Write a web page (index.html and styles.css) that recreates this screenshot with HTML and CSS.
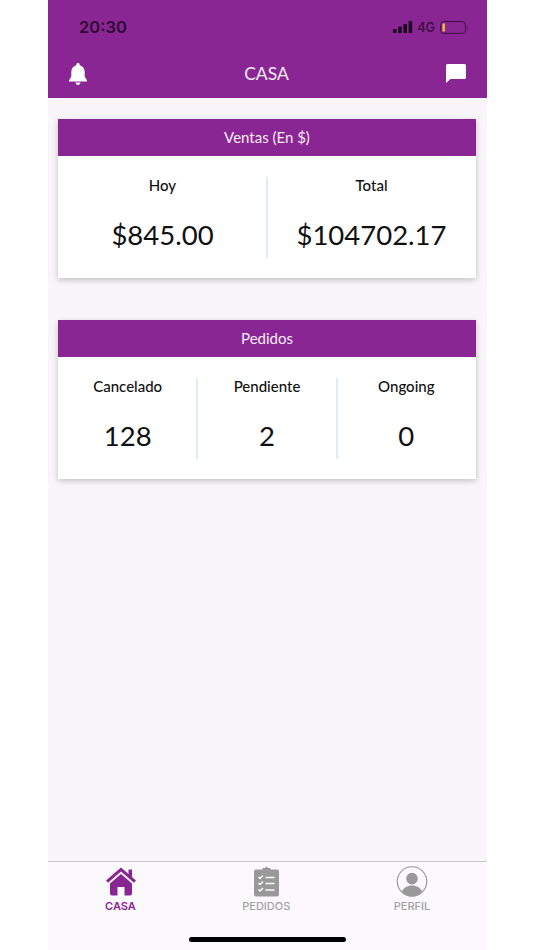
FILE: index.html
```html
<!DOCTYPE html>
<html lang="es">
<head>
<meta charset="utf-8">
<title>Casa</title>
<link rel="stylesheet" href="styles.css">
</head>
<body>
<div class="phone">
  <header class="top">
    <div class="status">
      <span class="time">20:30</span>
      <div class="indicators">
        <svg class="signal" viewBox="0 0 20 12" width="20" height="12"><rect x="0" y="8" width="3.6" height="4" rx=".6"/><rect x="5.2" y="5.5" width="3.6" height="6.5" rx=".6"/><rect x="10.4" y="3" width="3.6" height="9" rx=".6"/><rect x="15.6" y="0" width="3.6" height="12" rx=".6"/></svg>
        <span class="net">4G</span>
        <svg class="battery" viewBox="0 0 29 13" width="29" height="13"><rect x=".6" y=".6" width="24.8" height="11.8" rx="3" fill="none" stroke="#3d1042" stroke-width="1"/><rect x="2.5" y="2.5" width="2.4" height="8" fill="#f2c230"/><path d="M27 4.8c1 .3 1 3.1 0 3.4z" fill="#3d1042"/></svg>
      </div>
    </div>
    <div class="nav">
      <svg class="bell" viewBox="0 0 18 22" width="18" height="22"><path d="M9 0c1 0 1.7.7 1.700 1.700v.6c3.300.8 5 3.600 5 7v4.200L18 17.500v.9H0v-.9l2.300-4V9.300c0-3.400 1.700-6.200 5-7v-.6C7.300.7 8 0 9 0zM6.500 19.500h5C11.300 21 10.300 22 9 22s-2.300-1-2.500-2.500z"/></svg>
      <span class="nav-title">CASA</span>
      <svg class="chat" viewBox="0 0 20 19" width="20" height="19"><path d="M1.500 0h17A1.500 1.500 0 0 1 20 1.500v12a1.500 1.500 0 0 1-1.500 1.500H4.500L0 19V1.500A1.500 1.500 0 0 1 1.500 0z"/></svg>
    </div>
  </header>

  <main class="content">
    <section class="card">
      <h2 class="card-head">Ventas (En $)</h2>
      <div class="card-body">
        <div class="metric"><span class="label">Hoy</span><span class="value">$845.00</span></div>
        <div class="metric"><span class="label">Total</span><span class="value">$104702.17</span></div>
      </div>
    </section>
    <section class="card">
      <h2 class="card-head">Pedidos</h2>
      <div class="card-body">
        <div class="metric"><span class="label">Cancelado</span><span class="value">128</span></div>
        <div class="metric"><span class="label">Pendiente</span><span class="value">2</span></div>
        <div class="metric"><span class="label">Ongoing</span><span class="value">0</span></div>
      </div>
    </section>
  </main>

  <nav class="tabs">
    <div class="tab active">
      <svg viewBox="0 0 30 29" width="30" height="29"><path d="M15 0.500 22.500 7V2.500h3.500V10l4 3.500-2 2.200L15 4.500 2 15.700l-2-2.200z"/><path d="M15 7 26 16.500V26.500a2 2 0 0 1-2 2H18.500V20h-7v8.500H6a2 2 0 0 1-2-2V16.500z"/></svg>
      <span>CASA</span>
    </div>
    <div class="tab">
      <svg viewBox="0 0 25 30" width="25" height="30"><path fill-rule="evenodd" d="M2 3h6.500V1.500L11 1.500C11.500.5 12 0 12.500 0s1 .5 1.500 1.500h2.500V3H23a2 2 0 0 1 2 2v23a2 2 0 0 1-2 2H2a2 2 0 0 1-2-2V5a2 2 0 0 1 2-2z"/><path d="M4.500 10.500l1.500 1.500 3-3M4.500 16.500l1.500 1.500 3-3M4.500 23l1.500 1.500 3-3M11.500 11h9M11.500 17h9M11.500 23.500h9" fill="none" stroke="#fcf9fc" stroke-width="1.500"/></svg>
      <span>PEDIDOS</span>
    </div>
    <div class="tab">
      <svg viewBox="0 0 32 32" width="32" height="32"><circle cx="16" cy="16" r="15.200" fill="none" stroke="#999" stroke-width="1.200"/><circle cx="16" cy="13" r="6"/><path d="M5.500 27c1.500-4.500 5.500-6.800 10.500-6.800s9 2.300 10.500 6.800a15 15 0 0 1-21 0z"/></svg>
      <span>PERFIL</span>
    </div>
  </nav>
  <div class="home-bar"><span class="home-pill"></span></div>
</div>
</body>
</html>
```

FILE: styles.css
```css
* { box-sizing: border-box; }
html, body { margin: 0; height: 950px; background: #fff; overflow: hidden; }
body { padding: 0 47px 0 48px; font-family: Lato, "Liberation Sans", sans-serif; }

.phone { height: 950px; display: flex; flex-direction: column; background: #f8f6f8; }

.top { height: 97.500px; background: #8a2693; flex: none; }
.status { height: 53px; padding: 17px 18px 0 31px; display: flex; justify-content: space-between; align-items: flex-start; color: #2b0a30; }
.time { font-family: Inter, "Liberation Sans", sans-serif; font-weight: 600; font-size: 16.500px; line-height: 20px; }
.indicators { display: flex; align-items: center; gap: 4px; height: 20px; }
.signal { fill: #1e0722; }
.net { font-family: Inter, "Liberation Sans", sans-serif; font-size: 12.500px; color: #3d1042; font-weight: 600; }
.battery { margin-left: 1px; }

.nav { height: 44px; padding: 0 21px; display: flex; align-items: center; justify-content: space-between; }
.bell { fill: #fff; margin-top: -2px; }
.chat { fill: #fff; margin-top: -4px; }
.nav-title { color: #f6ecf7; font-size: 17.500px; line-height: 20px; margin-top: -3px; }

.content { flex: 1; padding: 21.500px 11px 0 10px; display: flex; flex-direction: column; gap: 42px; }
.card { height: 159px; background: #fff; box-shadow: 0 2px 6px rgba(0, 0, 0, 0.22); }
.card-head { margin: 0; height: 37px; background: #8a2693; color: #f6ecf7; font-size: 15px; font-weight: 400; line-height: 37px; text-align: center; }
.card-body { display: flex; height: 122px; padding: 21px 1px 20px; }
.metric { flex: 1; display: flex; flex-direction: column; align-items: center; border-left: 2px solid #dcecf8; }
.metric:first-child { border-left: 0; }
.label { font-size: 15px; font-weight: 500; line-height: 18px; color: #111; margin-top: -1px; }
.value { font-size: 27.500px; line-height: 36px; color: #111; margin-top: 23px; }

.tabs { height: 52px; flex: none; background: #fcf9fc; border-top: 1px solid #c8c6c8; display: flex; justify-content: space-between; padding: 4px 30px 0 27.500px; }
.tab { width: 90px; display: flex; flex-direction: column; align-items: center; fill: #999; color: #a3a1a3; }
.tab svg { height: 31px; }
.tab span { font-family: Inter, "Liberation Sans", sans-serif; font-size: 11px; font-weight: 500; line-height: 12px; margin-top: 3px; }
.tab.active { fill: #8a2693; color: #8a2693; }
.tab.active span { font-weight: 600; }

.home-bar { height: 37px; flex: none; background: #fcf9fc; display: flex; justify-content: center; padding-top: 24px; }
.home-pill { width: 157px; height: 5px; border-radius: 3px; background: #000; }
```
